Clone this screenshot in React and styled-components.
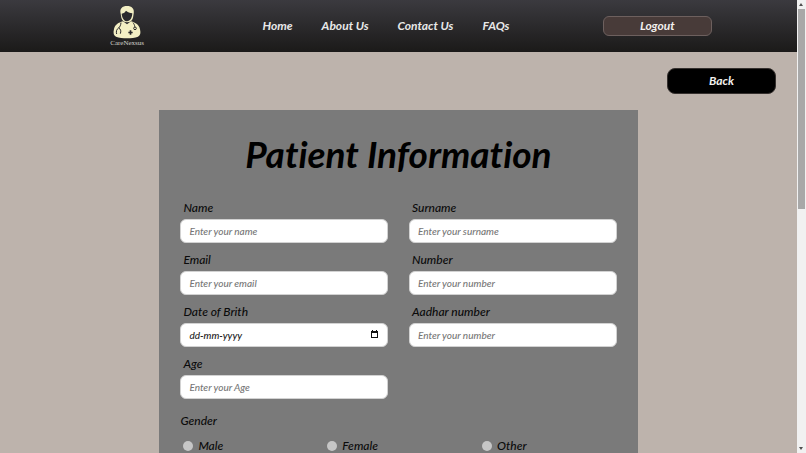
import React from "react";
import styled, { createGlobalStyle } from "styled-components";

const GlobalStyle = createGlobalStyle`
  *, *::before, *::after { box-sizing: border-box; }
  body {
    margin: 0;
    background: #bdb3ac;
    color: #0b0b0b;
    font-family: Lato, "Open Sans", sans-serif;
    font-style: italic;
    font-size: 12px;
    font-weight: 500;
    font-variant-ligatures: none;
  }
  button, input { font: inherit; }
`;

const Shell = styled.div`
  display: grid;
  grid-template-columns: minmax(0, 1fr) 9px;
  height: 100vh;
`;

const Page = styled.div`
  overflow-y: auto;
  scrollbar-width: none;
`;

const Header = styled.header`
  display: grid;
  grid-template-columns: 254fr 263fr 279fr;
  align-items: center;
  justify-items: center;
  height: 52px;
  background: linear-gradient(#3b3a3f, #1b1a19);
`;

const Logo = styled.a`
  display: flex;
  flex-direction: column;
  align-items: center;
  color: #d4d2cc;
  font: normal 7px/8px "Liberation Serif", serif;
  text-decoration: none;
`;

const Nav = styled.nav`
  display: flex;
  gap: 29px;
`;

const NavLink = styled.a`
  color: #e8e8e8;
  font-weight: 700;
  line-height: 16px;
  text-decoration: none;
  white-space: nowrap;
`;

const ActionButton = styled.button`
  width: 109px;
  height: ${({ $tall }) => ($tall ? "26px" : "20px")};
  padding: 0;
  border: 1px solid ${({ $tall }) => ($tall ? "#35302e" : "#6d605e")};
  border-radius: ${({ $tall }) => ($tall ? "8px" : "6px")};
  background: ${({ $tall }) => ($tall ? "#000" : "#483b39")};
  color: #f2f0ee;
  font-weight: 700;
  line-height: 16px;
`;

const Toolbar = styled.div`
  display: flex;
  justify-content: flex-end;
  padding: 16px 21px 16px;
`;

const Card = styled.form`
  width: 60%;
  margin: 0 auto;
  padding: 20px 21px;
  background: #7a7a7a;
`;

const Title = styled.h1`
  margin: 0 0 22px;
  color: #000;
  font-size: 37px;
  font-weight: 700;
  line-height: 48px;
  text-align: center;
  white-space: nowrap;
`;

const Fields = styled.div`
  display: grid;
  grid-template-columns: 1fr 1fr;
  gap: 9px 21px;
`;

const Field = styled.div`
  display: flex;
  flex-direction: column;
  gap: 3px;
`;

const Label = styled.label`
  padding-left: 3px;
  line-height: 16px;
`;

const Control = styled.div`
  display: flex;
  align-items: center;
  height: 24px;
  padding: 0 8px 1px;
  border: 1px solid #d2d2d2;
  border-radius: 6px;
  background: #fff;
`;

const TextInput = styled.input`
  flex: 1;
  min-width: 0;
  padding: 0;
  border: 0;
  outline: 0;
  background: transparent;
  color: #222;
  font-size: 10px;
  line-height: 16px;
  &::placeholder {
    color: ${({ $dark }) => ($dark ? "#222" : "#777")};
    opacity: 1;
  }
`;

const PickerButton = styled.button`
  display: flex;
  padding: 0;
  border: 0;
  background: none;
`;

const GenderGroup = styled.fieldset`
  margin: 14px 0 0;
  padding: 0;
  border: 0;
`;

const Legend = styled.legend`
  padding: 0;
  line-height: 16px;
`;

const Options = styled.div`
  display: flex;
  gap: 104px;
  padding: 9px 3px 24px;
`;

const Option = styled.label`
  display: flex;
  align-items: center;
  gap: 5px;
  line-height: 16px;
`;

const Radio = styled.input`
  appearance: none;
  width: 10px;
  height: 10px;
  margin: 0;
  border-radius: 50%;
  background: #c6c6c6;
  &:checked { background: #222; }
`;

const ScrollTrack = styled.div`
  display: flex;
  flex-direction: column;
  align-items: center;
  padding: 0 1px;
  background: #f1f1f1;
`;

const ScrollArrow = styled.svg`
  flex: none;
  width: 7px;
  height: 9px;
  fill: #505050;
`;

const ScrollRoom = styled.div`
  flex: 1;
  width: 100%;
`;

const ScrollThumb = styled.div`
  height: 46%;
  background: #a8a8a8;
`;

const fields = [
  { id: "name", label: "Name", hint: "Enter your name" },
  { id: "surname", label: "Surname", hint: "Enter your surname" },
  { id: "email", label: "Email", hint: "Enter your email" },
  { id: "number", label: "Number", hint: "Enter your number" },
  { id: "dob", label: "Date of Brith", hint: "dd-mm-yyyy", date: true },
  { id: "aadhar", label: "Aadhar number", hint: "Enter your number" },
  { id: "age", label: "Age", hint: "Enter your Age" },
];

function DoctorMark() {
  return (
    <svg width="28" height="34" viewBox="68 12 84 102" aria-hidden="true">
      <path
        d="M91 38C87 23 96 15 110 15s23 8 20 23l-2 12c-2 8-7 13-18 14-10-1-15-6-17-14z"
        fill="#f3efc4"
      />
      <path
        d="M94 38c7-1 10-5 13-9 5 5 12 7 19 8-1 14-6 23-16 24-9-1-15-10-16-23z"
        fill="#2b2a2d"
      />
      <path
        d="M98 61l12 9 12-9c14 4 24 10 27 24 3 12 1 19-6 22-18 6-48 6-66 0-7-3-9-11-6-23 3-13 13-19 27-23z"
        fill="#f3efc4"
      />
      <g fill="none" stroke="#292829" strokeWidth="3">
        <path d="M92 65c-1 8-3 12-7 16-7 4-8 11-6 18M85 81c6 3 8 9 5 17" />
        <path d="M128 65c3 4 5 7 5 12" />
        <circle cx="134" cy="82" r="4" />
      </g>
      <path d="M118 88h5v4h4v5h-4v4h-5v-4h-4v-5h4z" fill="#292829" />
    </svg>
  );
}

function CalendarIcon() {
  return (
    <svg width="9" height="9" viewBox="0 0 9 9" aria-hidden="true">
      <path d="M1 1h1V0h1v1h3V0h1v1h1v7H1zM2 3v4h5V3z" fill="#111" fillRule="evenodd" />
    </svg>
  );
}

export default function App() {
  return (
    <>
      <GlobalStyle />
      <Shell>
        <Page>
          <Header>
            <Logo href="#home">
              <DoctorMark />
              <span>CareNexsus</span>
            </Logo>
            <Nav>
              {["Home", "About Us", "Contact Us", "FAQs"].map((item) => (
                <NavLink key={item} href="#">{item}</NavLink>
              ))}
            </Nav>
            <ActionButton type="button">Logout</ActionButton>
          </Header>
          <Toolbar>
            <ActionButton type="button" $tall>Back</ActionButton>
          </Toolbar>
          <Card>
            <Title>Patient Information</Title>
            <Fields>
              {fields.map(({ id, label, hint, date }) => (
                <Field key={id}>
                  <Label htmlFor={id}>{label}</Label>
                  <Control>
                    <TextInput id={id} type="text" placeholder={hint} $dark={date} />
                    {date && (
                      <PickerButton type="button" aria-label="Choose date">
                        <CalendarIcon />
                      </PickerButton>
                    )}
                  </Control>
                </Field>
              ))}
            </Fields>
            <GenderGroup>
              <Legend>Gender</Legend>
              <Options>
                {["Male", "Female", "Other"].map((item) => (
                  <Option key={item}>
                    <Radio type="radio" name="gender" value={item} />
                    {item}
                  </Option>
                ))}
              </Options>
            </GenderGroup>
          </Card>
        </Page>
        <ScrollTrack aria-hidden="true">
          <ScrollArrow viewBox="0 0 7 9"><path d="M1 6l2-3 2 3z" /></ScrollArrow>
          <ScrollRoom><ScrollThumb /></ScrollRoom>
          <ScrollArrow viewBox="0 0 7 9"><path d="M1 3l2 3 2-3z" /></ScrollArrow>
        </ScrollTrack>
      </Shell>
    </>
  );
}
